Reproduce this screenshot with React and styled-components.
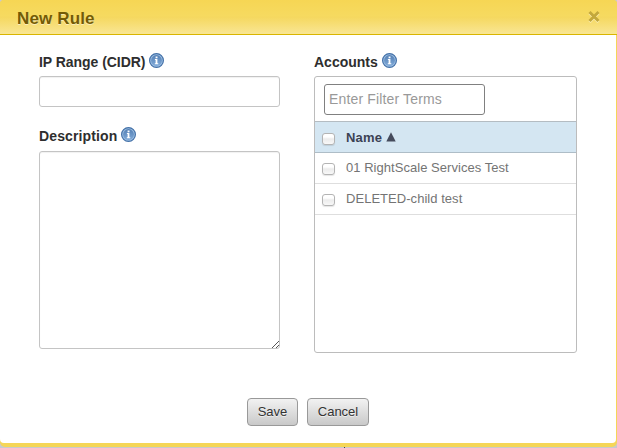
import React from 'react';
import styled, { createGlobalStyle } from 'styled-components';

const GlobalStyle = createGlobalStyle`
  *, *::before, *::after { box-sizing: border-box; }
  body {
    margin: 0;
    background: #c9cacb;
    font-family: "Liberation Sans", Arial, Helvetica, sans-serif;
    overflow: hidden;
  }
`;

const Dialog = styled.section`
  width: 617px;
  height: 447px;
  display: flex;
  flex-direction: column;
  background: #f5d657;
  border-radius: 4px 4px 5px 5px;
  overflow: hidden;
`;

const Header = styled.header`
  height: 35px;
  flex: none;
  display: flex;
  align-items: center;
  justify-content: space-between;
  padding: 2px 17px 0 17px;
  border-bottom: 1px solid #d9b500;
  background: linear-gradient(#f6d654 0, #f6da60 16px, #f5d85f 17px, #f9e694 34px);
`;

const Title = styled.h1`
  margin: 1px 0 0;
  font-size: 17px;
  line-height: 20px;
  letter-spacing: 0.15px;
  color: #735b05;
  text-shadow: 0 1px 0 rgba(255, 255, 255, 0.5);
`;

const CloseButton = styled.button`
  width: 12px;
  height: 13px;
  margin-top: -4px;
  padding: 0;
  border: 0;
  background: none;

  svg { display: block; }
`;

const Body = styled.main`
  height: 408px;
  flex: none;
  margin-right: 1px;
  padding: 16px 39px 0 39px;
  display: flex;
  flex-direction: column;
  background: #fff;
  border-radius: 0 0 4px 4px;
`;

const Columns = styled.div`
  height: 302px;
  display: grid;
  grid-template-columns: 241px 263px;
  column-gap: 34px;
`;

const Column = styled.div`
  display: flex;
  flex-direction: column;
`;

const Label = styled.label`
  height: ${(p) => p.$height || 25}px;
  flex: none;
  display: flex;
  align-items: flex-start;
  gap: ${(p) => p.$gap || 4}px;
  margin-top: ${(p) => p.$top || 0}px;
  font-size: 14px;
  font-weight: bold;
  line-height: 22px;
  letter-spacing: ${(p) => p.$track || 0}px;
  color: #2e2e2e;

  svg { margin-top: 1px; }
`;

const TextInput = styled.input`
  width: 241px;
  height: 31px;
  padding: 4px 6px;
  border: 1px solid #c4c4c4;
  border-radius: 3px;
  box-shadow: inset 0 1px 1px rgba(0, 0, 0, 0.06);
  outline: none;
`;

const DescriptionField = styled.div`
  height: 198px;
  display: flex;
  align-items: flex-end;
  justify-content: flex-end;
  border: 1px solid #c4c4c4;
  border-radius: 3px;
  box-shadow: inset 0 1px 1px rgba(0, 0, 0, 0.06);
`;

const DescriptionInput = styled.textarea`
  flex: 1;
  align-self: stretch;
  margin-right: -8px;
  padding: 6px;
  border: 0;
  background: transparent;
  resize: none;
  outline: none;
`;

const AccountsPanel = styled.div`
  height: 277px;
  border: 1px solid #bcbcbc;
  border-radius: 3px;
`;

const FilterBar = styled.div`
  height: 44px;
  padding: 7px 9px 0;
`;

const FilterInput = styled.input`
  display: block;
  width: 161px;
  height: 31px;
  padding: 0 4px 1px;
  border: 1px solid #808080;
  border-radius: 3px;
  font: 14px "Liberation Sans", Arial, sans-serif;
  letter-spacing: 0.15px;
  outline: none;

  &::placeholder { color: #999; opacity: 1; }
`;

const Row = styled.div`
  height: ${(p) => (p.$head ? 32 : 31)}px;
  display: flex;
  align-items: center;
  gap: 11px;
  padding: 0 8px 0 7px;
  font-size: 13px;
  line-height: 16px;
  letter-spacing: 0.04px;
  font-weight: ${(p) => (p.$head ? 'bold' : 'normal')};
  color: ${(p) => (p.$head ? '#3c4254' : '#747474')};
  background: ${(p) => (p.$head ? '#d4e6f2' : '#fff')};
  border-top: ${(p) => (p.$head ? '1px solid #b4bcc2' : '0')};
  border-bottom: 1px solid ${(p) => (p.$head ? '#aebdc7' : '#dedede')};
`;

const Checkbox = styled.input`
  appearance: none;
  flex: none;
  width: 13px;
  height: 12px;
  margin: ${(p) => (p.$head ? 4 : 2)}px 0 0;
  border: 1px solid #b4b4b4;
  border-radius: 3px;
  background: linear-gradient(#fff 0 30%, #ececec 50%, #f8f8f8);
  box-shadow: 0 1px 1px rgba(0, 0, 0, 0.1);
`;

const SortLabel = styled.span`
  display: flex;
  align-items: center;
  gap: 4px;
  padding-top: 2px;
  letter-spacing: 0.15px;

  svg { margin-top: -3px; }
`;

const Actions = styled.footer`
  display: flex;
  justify-content: center;
  gap: 9px;
  margin-top: 45px;
`;

const Button = styled.button`
  width: ${(p) => p.$width}px;
  height: 28px;
  padding: 0 0 1px;
  border: 1px solid #999;
  border-radius: 4px;
  background: linear-gradient(#f2f2f2, #c9c9c9);
  color: #333;
  font: 13px "Liberation Sans", Arial, sans-serif;
  text-shadow: 0 1px 0 rgba(255, 255, 255, 0.6);
`;

const PageEdge = styled.div`
  height: 1px;
  padding-left: 344px;
`;

const EdgeTick = styled.div`
  width: 1px;
  height: 1px;
  background: #444;
`;

const InfoIcon = ({ id }) => (
  <svg width="15" height="16" viewBox="0 0 15 16" aria-hidden="true">
    <defs>
      <linearGradient id={id} x1="0" y1="0" x2="0" y2="1">
        <stop offset="0" stopColor="#5580b4" />
        <stop offset="1" stopColor="#7fa9d8" />
      </linearGradient>
    </defs>
    <circle cx="7.5" cy="8.5" r="6.9" fill="#9dbfe2" stroke="#4471a8" strokeWidth="1.2" />
    <circle cx="7.5" cy="8.5" r="5.4" fill={`url(#${id})`} />
    <path d="M6.6 4.6h1.9v1.6H6.6zM5.9 7.1h2.5v4.2h.9v1H5.8v-1h.8V8.1h-.7z" fill="#fff" />
  </svg>
);

const CloseIcon = () => (
  <svg width="12" height="13" viewBox="0 0 12 13" aria-hidden="true">
    <path d="M1.5 3l9 9M10.5 3l-9 9" stroke="#fbedb0" strokeWidth="3" />
    <path d="M1.5 2l9 9M10.5 2l-9 9" stroke="#c3a83c" strokeWidth="3" />
  </svg>
);

const ResizeGrip = () => (
  <svg width="7" height="8" viewBox="0 0 7 8" aria-hidden="true">
    <path
      d="M0 7h1v1H0zM1 6h1v1H1zM2 5h1v1H2zM3 4h1v1H3zM4 3h1v1H4zM5 2h1v1H5zM6 1h1v1H6zM4 7h1v1H4zM5 6h1v1H5zM6 5h1v1H6z"
      fill="#555"
      shapeRendering="crispEdges"
    />
  </svg>
);

const SortArrow = () => (
  <svg width="10" height="10" viewBox="0 0 10 10" aria-hidden="true">
    <path d="M5 .3L9.7 9.5H.3z" fill="#454b5c" />
  </svg>
);

const accounts = ['01 RightScale Services Test', 'DELETED-child test'];

export default function App() {
  return (
    <>
      <GlobalStyle />
      <Dialog role="dialog" aria-label="New Rule">
        <Header>
          <Title>New Rule</Title>
          <CloseButton aria-label="Close"><CloseIcon /></CloseButton>
        </Header>
        <Body>
          <Columns>
            <Column>
              <Label htmlFor="range" $track={-0.04} $gap={3}>IP Range (CIDR) <InfoIcon id="info-range" /></Label>
              <TextInput id="range" />
              <Label htmlFor="description" $top={18} $height={26} $track={0.13}>Description <InfoIcon id="info-description" /></Label>
              <DescriptionField>
                <DescriptionInput id="description" />
                <ResizeGrip />
              </DescriptionField>
            </Column>
            <Column>
              <Label htmlFor="filter">Accounts <InfoIcon id="info-accounts" /></Label>
              <AccountsPanel>
                <FilterBar>
                  <FilterInput id="filter" placeholder="Enter Filter Terms" />
                </FilterBar>
                <Row $head>
                  <Checkbox $head type="checkbox" aria-label="Select all" />
                  <SortLabel>Name <SortArrow /></SortLabel>
                </Row>
                {accounts.map((name) => (
                  <Row key={name}>
                    <Checkbox type="checkbox" aria-label={name} />
                    <span>{name}</span>
                  </Row>
                ))}
              </AccountsPanel>
            </Column>
          </Columns>
          <Actions>
            <Button $width={51}>Save</Button>
            <Button $width={62}>Cancel</Button>
          </Actions>
        </Body>
      </Dialog>
      <PageEdge><EdgeTick /></PageEdge>
    </>
  );
}
